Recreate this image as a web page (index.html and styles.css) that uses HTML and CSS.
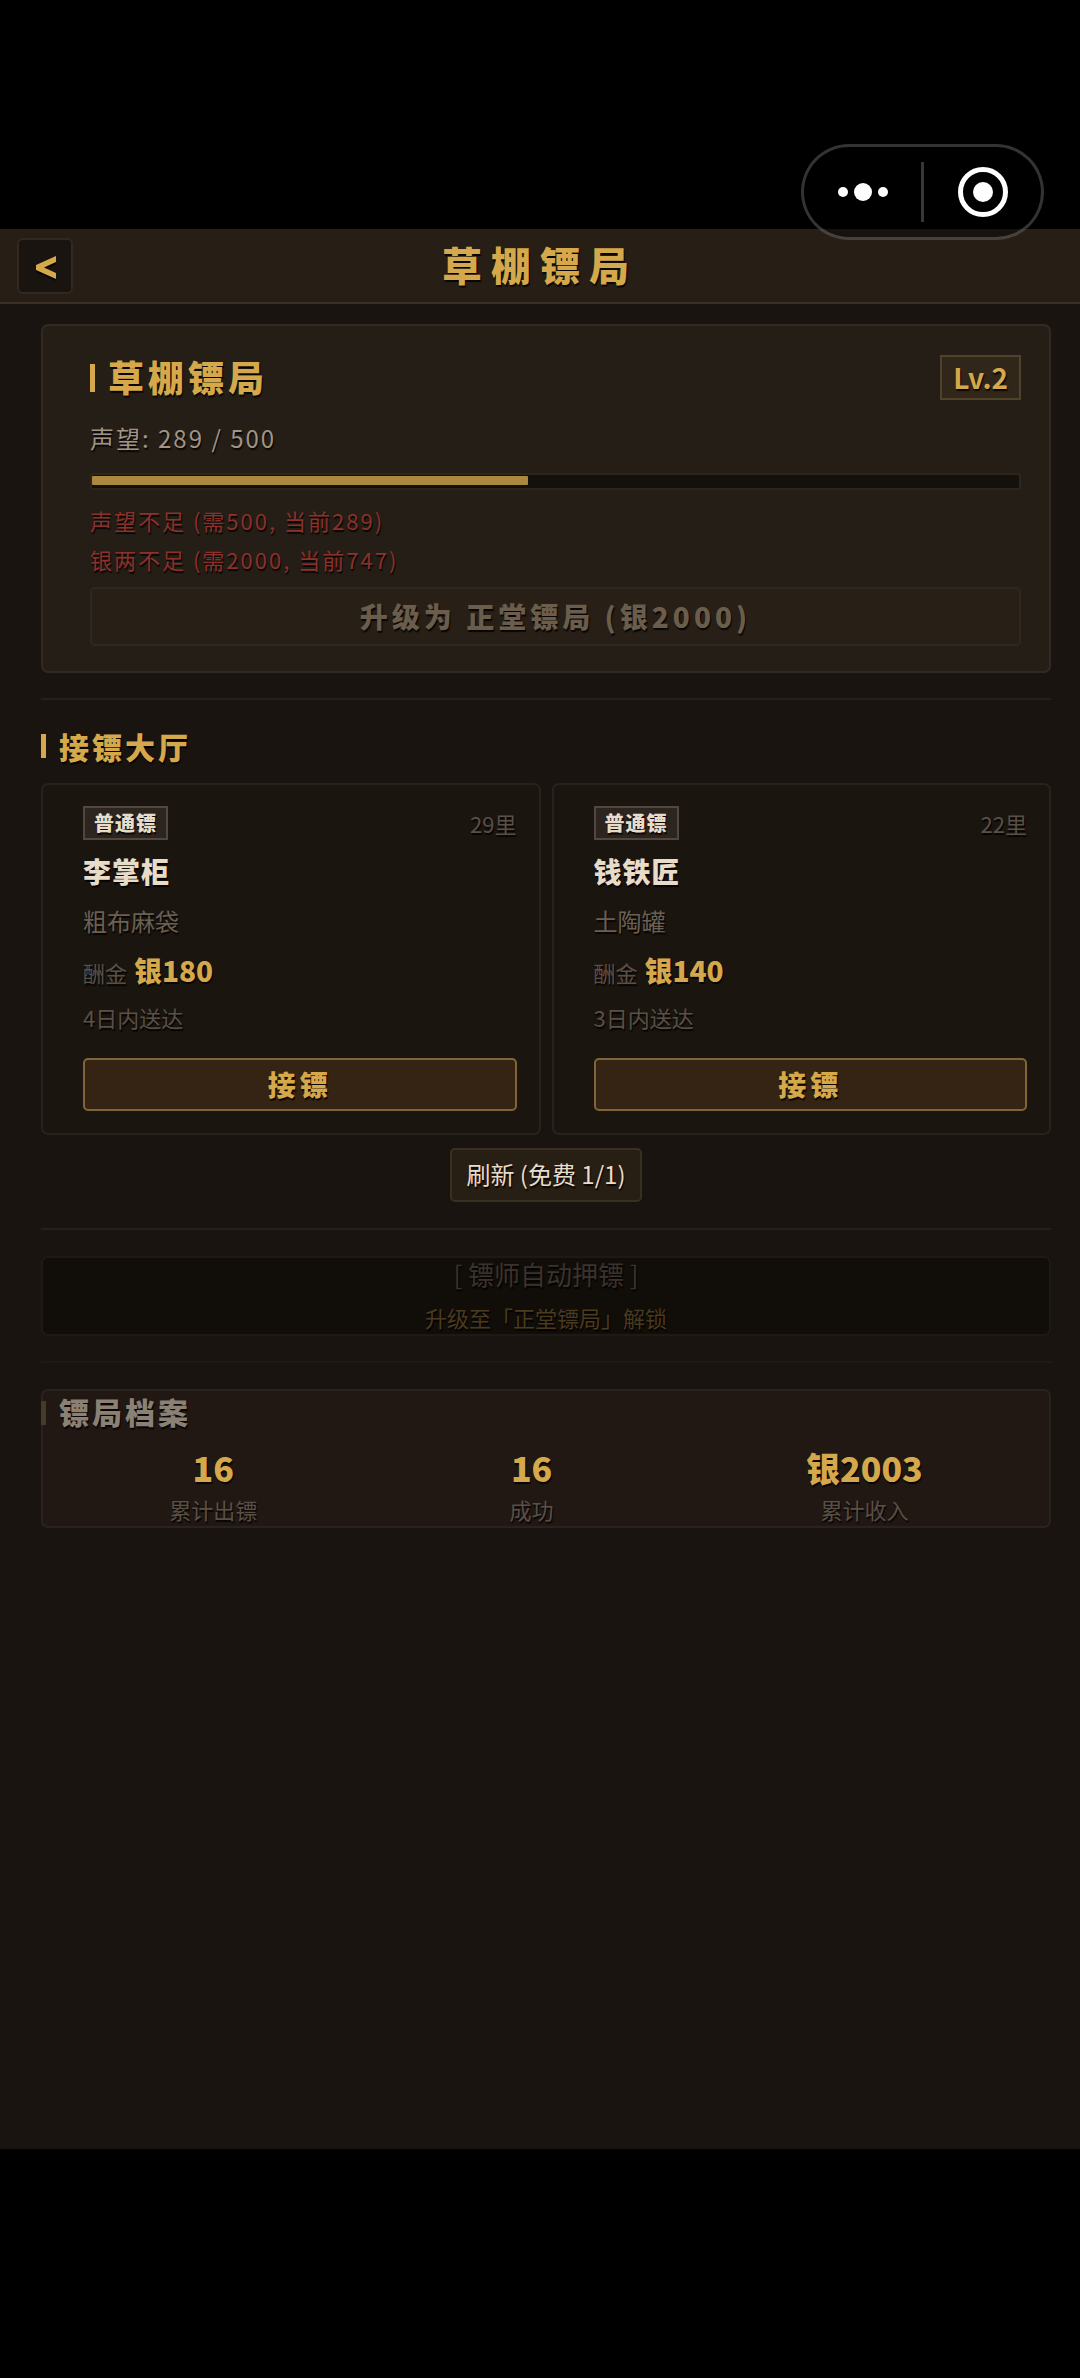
FILE: index.html
```html
<!DOCTYPE html>
<html lang="zh-CN">
<head>
<meta charset="utf-8">
<meta name="viewport" content="width=device-width, initial-scale=1">
<title>草棚镖局</title>
<link rel="stylesheet" href="styles.css">
</head>
<body>
<div class="capsule">
  <button class="capsule-btn" type="button" aria-label="更多">
    <svg width="50" height="20" viewBox="0 0 50 20"><g fill="#fff"><circle cx="5" cy="10" r="5"/><circle cx="25" cy="10" r="9"/><circle cx="45" cy="10" r="5"/></g></svg>
  </button>
  <span class="capsule-line"></span>
  <button class="capsule-btn" type="button" aria-label="关闭">
    <svg width="50" height="50" viewBox="0 0 50 50"><circle cx="25" cy="25" r="22.5" fill="none" stroke="#fff" stroke-width="5"/><circle cx="25" cy="25" r="10" fill="#fff"/></svg>
  </button>
</div>

<header class="topbar">
  <button class="back" type="button" aria-label="返回">
    <svg width="20" height="30" viewBox="0 0 20 30"><path d="M20 6L0 15V20L20 29V23L8 18L20 12Z" fill="#000" fill-opacity=".7"/><path d="M20 4L0 13V18L20 27V21L8 15.500L20 10Z" fill="#d4a84b"/></svg>
  </button>
  <h1 class="title">草棚镖局</h1>
</header>

<main class="page">
  <section class="card guild">
    <div class="row">
      <h2 class="heading heading-lg"><span>草棚镖局</span></h2>
      <span class="level">Lv.2</span>
    </div>
    <p class="fame">声望: 289 / 500</p>
    <div class="bar"><div class="bar-fill" style="width:47%"></div></div>
    <ul class="lacks">
      <li>声望不足 (需500, 当前289)</li>
      <li>银两不足 (需2000, 当前747)</li>
    </ul>
    <button class="upgrade" type="button" disabled>升级为 正堂镖局 (银2000)</button>
  </section>

  <hr class="rule">

  <section>
    <h2 class="heading hall"><span>接镖大厅</span></h2>
    <div class="jobs">
      <article class="card job">
        <div class="row"><span class="tag">普通镖</span><span class="distance">29里</span></div>
        <h3 class="client">李掌柜</h3>
        <p class="goods">粗布麻袋</p>
        <p class="reward">酬金<strong class="silver">银180</strong></p>
        <p class="deadline">4日内送达</p>
        <button class="accept" type="button">接镖</button>
      </article>
      <article class="card job">
        <div class="row"><span class="tag">普通镖</span><span class="distance">22里</span></div>
        <h3 class="client">钱铁匠</h3>
        <p class="goods">土陶罐</p>
        <p class="reward">酬金<strong class="silver">银140</strong></p>
        <p class="deadline">3日内送达</p>
        <button class="accept" type="button">接镖</button>
      </article>
    </div>
    <button class="refresh" type="button">刷新 (免费 1/1)</button>
  </section>

  <hr class="rule">

  <section class="card locked">
    <p class="locked-name">[ 镖师自动押镖 ]</p>
    <p class="locked-hint">升级至「正堂镖局」解锁</p>
  </section>

  <hr class="rule rule-faint">

  <section class="card record">
    <h2 class="heading heading-dim"><span>镖局档案</span></h2>
    <dl class="stats">
      <div class="stat"><dt>累计出镖</dt><dd>16</dd></div>
      <div class="stat"><dt>成功</dt><dd>16</dd></div>
      <div class="stat"><dt>累计收入</dt><dd>银2003</dd></div>
    </dl>
  </section>
</main>
</body>
</html>
```
FILE: styles.css
```css
:root {
  --gold: #d4a84b;
  --line: #332922;
  --safe: 229px;
}

* {
  box-sizing: border-box;
  margin: 0;
  padding: 0;
}

body {
  display: flex;
  flex-direction: column;
  min-height: 100vh;
  padding: var(--safe) 0;
  background: #000;
  color: #e8dcc8;
  font: 24px/34px "Noto Sans CJK SC", sans-serif;
  text-shadow: 1px 2px 1px rgba(0, 0, 0, .8);
}

button {
  font: inherit;
  text-shadow: inherit;
}

/* Host app's floating menu */
.capsule {
  position: absolute;
  z-index: 1;
  top: 144px;
  right: 36px;
  display: flex;
  align-items: center;
  width: 243px;
  height: 96px;
  border: 3px solid rgba(255, 255, 255, .2);
  border-radius: 48px;
  background: rgba(0, 0, 0, .4);
}

.capsule-btn {
  display: flex;
  flex: 1;
  justify-content: center;
  border: 0;
  background: none;
}

.capsule-line {
  width: 3px;
  height: 60px;
  background: #373737;
}

.topbar {
  display: grid;
  grid-template-columns: 56px 1fr 56px;
  align-items: center;
  height: 75px;
  padding: 0 17px;
  border-bottom: 2px solid #3a3027;
  background: #271e16;
}

.back {
  display: grid;
  place-items: center;
  height: 56px;
  padding: 2px 0 0 2px;
  border: 2px solid #302821;
  border-radius: 6px;
  background: #19140f;
}

.title {
  padding-bottom: 4px;
  color: var(--gold);
  font-size: 40px;
  font-weight: 900;
  line-height: 56px;
  letter-spacing: 9px;
  text-align: center;
}

.page {
  flex: 1;
  padding: 20px 29px 40px 41px;
  background: #1a1410;
}

.card {
  border: 2px solid var(--line);
  border-radius: 7px;
}

.row {
  display: flex;
  align-items: center;
  justify-content: space-between;
}

.heading {
  display: flex;
  align-items: center;
  gap: 13px;
  color: var(--gold);
  font-size: 30px;
  font-weight: 900;
  line-height: 40px;
  letter-spacing: 3px;
}

.heading::before {
  content: "";
  width: 5px;
  height: 24px;
  background: var(--gold);
}

.heading-lg {
  font-size: 36px;
  letter-spacing: 4px;
}

.heading-lg span {
  padding-bottom: 4px;
}

.heading-lg::before {
  height: 28px;
}

.guild {
  padding: 29px 28px 25px 47px;
  background: #251e17;
}

.level {
  padding: 0 11px;
  border: 2px solid #51422a;
  background: #30261a;
  color: var(--gold);
  font-size: 28px;
  font-weight: 700;
  line-height: 41px;
}

.fame {
  margin-top: 21px;
  color: #a09484;
  letter-spacing: 2px;
}

.bar {
  height: 17px;
  margin: 18px 0 11px;
  padding: 1px 0 3px;
  border: 2px solid #2d261f;
  border-radius: 3px;
  background: #14100b;
}

.bar-fill {
  height: 9px;
  border-radius: 1px;
  background: #ac883f;
}

.lacks {
  color: #8b302a;
  font-size: 22px;
  line-height: 39px;
  letter-spacing: 2px;
  list-style: none;
}

.upgrade {
  display: block;
  width: 100%;
  height: 59px;
  margin-top: 8px;
  padding-bottom: 2px;
  border: 2px solid #30271f;
  border-radius: 5px;
  background: #281f17;
  color: #6a5d4c;
  font-size: 28px;
  font-weight: 900;
  letter-spacing: 4px;
}

.rule {
  height: 2px;
  margin: 25px 0 26px;
  border: 0;
  background: #281e1a;
}

.rule-faint {
  background: #201915;
}

.hall {
  margin-bottom: 17px;
}

.jobs {
  display: grid;
  grid-template-columns: 1fr 1fr;
  gap: 11px;
}

.job {
  padding: 21px 22px 22px 40px;
  border-color: #2a211d;
  background: #1b1510;
}

.tag {
  padding: 0 9px;
  border: 2px solid #51473f;
  background: #2c241f;
  font-size: 20px;
  font-weight: 900;
  line-height: 30px;
  letter-spacing: 1px;
}

.distance,
.reward,
.deadline {
  color: #5a4f44;
  font-size: 22px;
}

.client {
  margin-top: 11px;
  font-size: 28px;
  font-weight: 900;
  line-height: 40px;
  letter-spacing: 1px;
}

.goods {
  margin-top: 13px;
  color: #6a6052;
}

.reward {
  display: flex;
  align-items: baseline;
  gap: 7px;
  margin-top: 12px;
  line-height: 40px;
}

.silver {
  color: var(--gold);
  font-size: 28px;
  font-weight: 900;
}

.deadline {
  margin-top: 8px;
}

.accept {
  display: block;
  width: 100%;
  height: 53px;
  margin-top: 24px;
  padding-bottom: 2px;
  border: 2px solid #80653a;
  border-radius: 5px;
  background: #352413;
  color: var(--gold);
  font-size: 28px;
  font-weight: 900;
  letter-spacing: 4px;
}

.refresh {
  display: block;
  height: 54px;
  margin: 13px auto 26px;
  padding: 0 14px 2px;
  border: 2px solid #3a2f23;
  border-radius: 5px;
  background: #271e14;
  color: #e8dcc8;
}

.locked {
  padding-bottom: 2px;
  border-color: #1e1915;
  background: #110d09;
  text-align: center;
}

.locked-name {
  color: #3a332c;
  font-size: 26px;
  line-height: 32px;
}

.locked-hint {
  margin-top: 12px;
  color: #4a3a1e;
  font-size: 22px;
  line-height: 30px;
}

.record {
  border-color: #2a221e;
  background: #211814;
}

.heading-dim {
  margin-left: -2px;
  color: #8a8074;
}

.heading-dim span {
  padding-bottom: 4px;
}

.heading-dim::before {
  background: #463a2a;
}

.stats {
  display: flex;
  justify-content: space-around;
  margin-top: 13px;
}

.stat {
  display: flex;
  flex-direction: column-reverse;
  align-items: center;
  gap: 6px;
}

.stat dt {
  padding-bottom: 2px;
  color: #5a4f44;
  font-size: 22px;
  line-height: 30px;
}

.stat dd {
  color: var(--gold);
  font-size: 34px;
  font-weight: 900;
  line-height: 40px;
}
```
